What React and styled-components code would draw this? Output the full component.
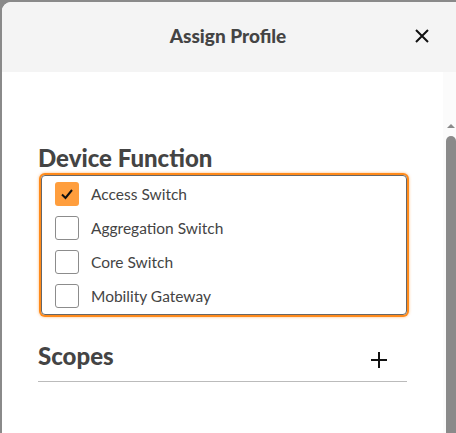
import React from 'react'
import styled, { createGlobalStyle } from 'styled-components'

const GlobalStyle = createGlobalStyle`
  html, body {
    margin: 0;
    height: 100%;
    background: #8a8a8a;
    font-family: Lato, "Open Sans", sans-serif;
    overflow: hidden;
  }
  #root {
    height: 100%;
  }
`

const Overlay = styled.div`
  height: 100%;
  padding: 2px 0 0 2px;
  box-sizing: border-box;
  display: flex;
`

const Modal = styled.div`
  flex: 1;
  display: flex;
  flex-direction: column;
  background: #fff;
  border-top-left-radius: 9px;
  overflow: hidden;
`

const Header = styled.header`
  height: 70px;
  box-sizing: border-box;
  padding-bottom: 4px;
  flex-shrink: 0;
  background: #f4f4f4;
  display: flex;
  align-items: center;
  justify-content: center;
  position: relative;
`

const Title = styled.h2`
  margin: 0;
  font-size: 19px;
  font-weight: 900;
  color: #444;
  padding-right: 2px;
`

const CloseButton = styled.button`
  position: absolute;
  right: 25px;
  top: 25px;
  width: 18px;
  height: 18px;
  padding: 0;
  border: 0;
  background: none;
  display: flex;
  align-items: center;
  justify-content: center;
`

const Body = styled.div`
  flex: 1;
  display: flex;
`

const Content = styled.div`
  flex: 1;
  padding: 72px 36px 0 36px;
`

const SectionTitle = styled.h3`
  margin: 0;
  font-size: 24px;
  line-height: 28px;
  font-weight: 900;
  color: #444;
`

const OptionBox = styled.div`
  margin: 3px 0 0 3px;
  border: 1px solid #666;
  border-radius: 4px;
  box-shadow: 0 0 0 2px #ff8a1a, 0 0 3px 2px rgba(255, 138, 26, 0.6);
  padding: 6px 13px 6px 13px;
  display: flex;
  flex-direction: column;
  gap: 10px;
`

const Option = styled.label`
  display: flex;
  align-items: center;
  gap: 12px;
  font-size: 15.5px;
  color: #444;
  height: 24px;
`

const Box = styled.span`
  width: 24px;
  height: 24px;
  box-sizing: border-box;
  border-radius: 3px;
  border: ${({ checked }) => (checked ? '0' : '1px solid #8c8c8c')};
  background: ${({ checked }) => (checked ? '#ff9e3d' : '#fff')};
  display: flex;
  align-items: center;
  justify-content: center;
  flex-shrink: 0;
`

const ScopesRow = styled.div`
  margin-top: 27px;
  display: flex;
  align-items: center;
  justify-content: space-between;
  padding: 0 19px 11px 0;
  border-bottom: 1px solid #bbb;
`

const AddButton = styled.button`
  width: 18px;
  height: 18px;
  padding: 0;
  border: 0;
  background: none;
  margin-top: 8px;
  display: flex;
`

const Scrollbar = styled.div`
  width: 13px;
  flex-shrink: 0;
  background: #fbfbfb;
  display: flex;
  flex-direction: column;
  align-items: flex-end;
  padding-top: 52px;
`

const Arrow = styled.div`
  width: 0;
  height: 0;
  margin-right: 1px;
  border-left: 4px solid transparent;
  border-right: 4px solid transparent;
  border-bottom: 4px solid #8a8a8a;
`

const Thumb = styled.div`
  margin-top: 8px;
  width: 10px;
  flex: 1;
  background: #8a8a8a;
  border-radius: 5px 5px 0 0;
`

const options = [
  { label: 'Access Switch', checked: true },
  { label: 'Aggregation Switch' },
  { label: 'Core Switch' },
  { label: 'Mobility Gateway' }
]

const App = () => (
  <Overlay>
    <GlobalStyle />
    <Modal>
      <Header>
        <Title>Assign Profile</Title>
        <CloseButton aria-label="close">
          <svg width="14" height="14" viewBox="0 0 14 14">
            <path d="M1 1 L13 13 M13 1 L1 13" stroke="#111" strokeWidth="2" />
          </svg>
        </CloseButton>
      </Header>
      <Body>
        <Content>
          <SectionTitle>Device Function</SectionTitle>
          <OptionBox>
            {options.map(o => (
              <Option key={o.label}>
                <Box checked={o.checked}>
                  {o.checked && (
                    <svg width="14" height="12" viewBox="0 0 14 12">
                      <path d="M2 6.5 L5.5 10 L12 2" fill="none" stroke="#111" strokeWidth="2" />
                    </svg>
                  )}
                </Box>
                {o.label}
              </Option>
            ))}
          </OptionBox>
          <ScopesRow>
            <SectionTitle>Scopes</SectionTitle>
            <AddButton aria-label="add">
              <svg width="18" height="18" viewBox="0 0 18 18">
                <path d="M9 1 V17 M1 9 H17" stroke="#111" strokeWidth="2" />
              </svg>
            </AddButton>
          </ScopesRow>
        </Content>
        <Scrollbar>
          <Arrow />
          <Thumb />
        </Scrollbar>
      </Body>
    </Modal>
  </Overlay>
)

export default App
